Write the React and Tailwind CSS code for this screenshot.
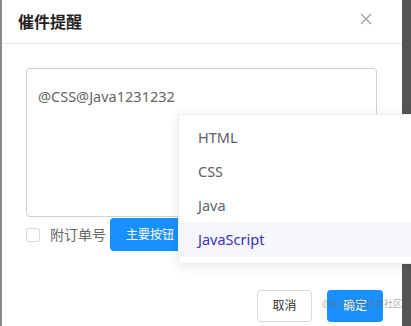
import React from "react";

const font = { fontFamily: '"Noto Sans", "Noto Sans CJK SC", sans-serif' };

export default function App() {
  return (
    <div className="relative flex h-[326px] w-[411px] overflow-hidden bg-[#555555]" style={font}>
      <div className="w-[2px] shrink-0 bg-[#8a8a8a]" />
      <div className="flex w-[400px] shrink-0 flex-col bg-white">
        <div className="flex h-[44px] items-center justify-between border-b border-[#e8e8e8] pl-[16px] pr-[30px]">
          <span className="text-[16px] font-semibold leading-none text-[#1f1f1f]">催件提醒</span>
          <svg width="12" height="12" viewBox="0 0 12 12" className="mt-[-6px]">
            <path d="M1 1L11 11M11 1L1 11" stroke="#9a9a9a" strokeWidth="1.1" />
          </svg>
        </div>
        <div className="flex flex-col px-[24px] pt-[24px]">
          <div className="h-[149px] w-[351px] rounded-[4px] border border-[#d0d0d0] px-[11px] pt-[17px] text-[14.5px] leading-[20px] text-[#666666]">
            @CSS@Java1231232
          </div>
          <div className="mt-[1px] flex items-center">
            <div className="h-[14px] w-[14px] rounded-[2px] border border-[#d9d9d9] bg-white" />
            <span className="ml-[10px] text-[14px] text-[#666666]">附订单号</span>
            <div className="ml-[4px] flex h-[33px] w-[80px] items-center rounded-[4px] bg-[#1890ff] pl-[16px] text-[12px] text-white">
              主要按钮
            </div>
          </div>
        </div>
        <div className="mt-auto flex justify-end gap-[15px] pb-[4px] pr-[19px]">
          <div className="flex h-[32px] w-[55px] items-center justify-center rounded-[4px] border border-[#d9d9d9] text-[12px] text-[#333333]">
            取消
          </div>
          <div className="flex h-[32px] w-[56px] items-center justify-center rounded-[4px] bg-[#1890ff] text-[12px] text-white">
            确定
          </div>
        </div>
      </div>
      <div className="w-[9px] shrink-0 bg-[#555555]" />

      <div className="absolute left-[178px] top-[114px] w-[250px] rounded-[4px] border border-[#ebeef5] bg-white py-[6px] shadow-[0_2px_12px_rgba(0,0,0,0.1)]">
        <div className="flex h-[34px] items-center pl-[19px] text-[14.5px] text-[#606266]">HTML</div>
        <div className="flex h-[34px] items-center pl-[19px] text-[14.5px] text-[#606266]">CSS</div>
        <div className="flex h-[34px] items-center pl-[19px] text-[14.5px] text-[#606266]">Java</div>
        <div className="flex h-[34px] items-center bg-[#f5f7fa] pl-[19px] text-[14.5px] text-[#3d30c4]">JavaScript</div>
      </div>

      <div className="pointer-events-none absolute left-[322px] top-[298px] whitespace-nowrap text-[9px] leading-[12px] text-[rgba(110,110,110,0.6)]">
        @稀土掘金技术社区
      </div>
    </div>
  );
}
